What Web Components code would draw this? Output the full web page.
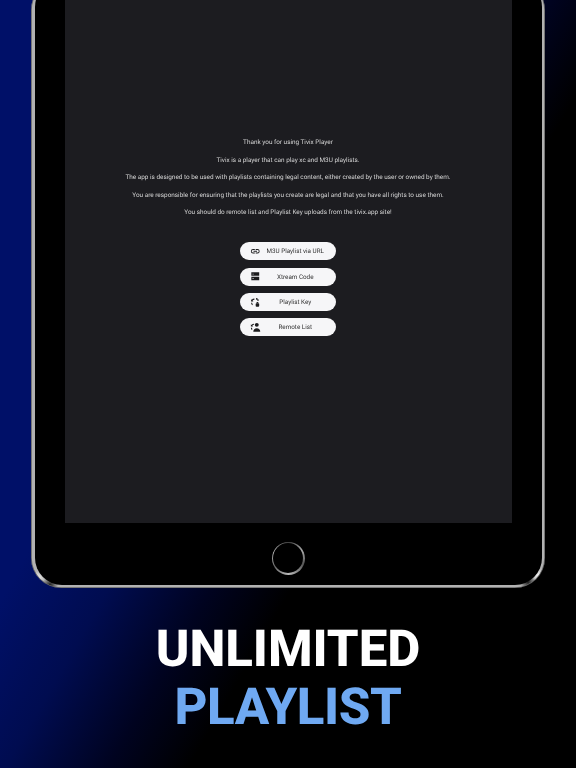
<!DOCTYPE html>
<html>
<head>
<meta charset="utf-8">
<style>
  html, body { margin: 0; height: 768px; overflow: hidden; background: #000; }
  body { font-family: Roboto, "Liberation Sans", sans-serif; text-rendering: geometricPrecision; }
</style>
</head>
<body>
<promo-page>
  <tablet-frame>
    <intro-text>
      <p>Thank you for using Tivix Player</p>
      <p>Tivix is a player that can play xc and M3U playlists.</p>
      <p>The app is designed to be used with playlists containing legal content, either created by the user or owned by them.</p>
      <p>You are responsible for ensuring that the playlists you create are legal and that you have all rights to use them.</p>
      <p>You should do remote list and Playlist Key uploads from the tivix.app site!</p>
    </intro-text>
    <menu-button icon="link">M3U Playlist via URL</menu-button>
    <menu-button icon="server">Xtream Code</menu-button>
    <menu-button icon="key">Playlist Key</menu-button>
    <menu-button icon="remote">Remote List</menu-button>
  </tablet-frame>
  <span slot="title">UNLIMITED</span>
  <span slot="subtitle">PLAYLIST</span>
</promo-page>
<script>
class PromoPage extends HTMLElement {
  constructor() {
    super();
    this.attachShadow({ mode: 'open' });
    this.shadowRoot.innerHTML = `
      <style>
        :host { display: block; width: 576px; height: 768px; overflow: hidden; color: #fff;
          background: linear-gradient(120deg, #001068 0%, #001068 34%, #000c50 44%, #000320 54%, #000 62%); }
        .top { height: 588px; display: flex; align-items: flex-end; justify-content: center; }
        h1 { margin: 33px 0 0; font: 800 51px/58px Roboto, sans-serif; letter-spacing: -.1px; text-align: center; will-change: transform; }
        h1 div:last-child { color: #6fa9f2; letter-spacing: -.4px; }
      </style>
      <div class="top"><slot></slot></div>
      <h1><div><slot name="title"></slot></div><div><slot name="subtitle"></slot></div></h1>
    `;
  }
}
customElements.define('promo-page', PromoPage);

class TabletFrame extends HTMLElement {
  constructor() {
    super();
    this.attachShadow({ mode: 'open' });
    this.shadowRoot.innerHTML = `
      <style>
        :host { display: block; width: 514px; height: 608px; box-sizing: border-box; padding: 0 3.5px 3.5px; border-radius: 30px; flex: none;
          box-shadow: inset .8px 0 #666, inset -.8px 0 #666, inset 0 -.8px #666;
          background:
            radial-gradient(circle 7px at 7px 598px, #f2f2f2, transparent),
            radial-gradient(circle 7px at 507px 595px, #f2f2f2, transparent),
            radial-gradient(circle 8px at 19px 605px, #1c1c1c, transparent),
            radial-gradient(circle 8px at 497px 602px, #1c1c1c, transparent),
            linear-gradient(#b2b2b2, #b2b2b2); }
        .body { height: 100%; background: #000; border-radius: 27px; display: flex; flex-direction: column; align-items: center; }
        .screen { width: 447px; height: 542.500px; flex: none; background: #1c1c20; box-sizing: border-box; padding-top: 154px;
          display: flex; flex-direction: column; align-items: center; gap: 7.3px; }
        .home { width: 33px; height: 33px; margin-top: 19px; border-radius: 50%; flex: none; box-sizing: border-box; padding: 1.4px;
          background: conic-gradient(#444, #aaa 60deg, #555 110deg, #bbb 180deg, #666 240deg, #bbb 290deg, #444); }
        .home div { height: 100%; border-radius: 50%; background: #000; }
      </style>
      <div class="body">
        <div class="screen"><slot></slot></div>
        <div class="home"><div></div></div>
      </div>
    `;
  }
}
customElements.define('tablet-frame', TabletFrame);

class IntroText extends HTMLElement {
  constructor() {
    super();
    this.attachShadow({ mode: 'open' });
    this.shadowRoot.innerHTML = `
      <style>
        :host { display: block; margin-bottom: 13.5px; text-align: center; color: #d4d4d4; filter: blur(.3px);
          font: 400 6.4px/17.5px Roboto, sans-serif; }
        ::slotted(p) { margin: 0; }
      </style>
      <slot></slot>
    `;
  }
}
customElements.define('intro-text', IntroText);

const ICONS = {
  link: '<path d="M3.900 12c0-1.700 1.400-3.100 3.100-3.100h4V7H7a5 5 0 0 0 0 10h4v-1.900H7A3.100 3.100 0 0 1 3.900 12zM8 13h8v-2H8v2zm9-6h-4v1.900h4a3.100 3.100 0 0 1 0 6.200h-4V17h4a5 5 0 0 0 0-10z"/>',
  server: '<path d="M3 3h18v8H3V3zm3 3v2h2V6H6zM3 13h18v8H3v-8zm3 3v2h2v-2H6z"/>',
  key: '<path d="M10 3.500a8.500 8.500 0 0 0-6 3L2.500 5v5.500H8L5.800 8.300A6 6 0 0 1 10 6V3.500zM2.500 13h2.400c.2 1.500.7 2.800 1.600 3.900l-1.700 1.700A9 9 0 0 1 2.500 13z"/><path d="M14 2h3v3h2.500v4h-2.500V6h-3V2z"/><rect x="13" y="14" width="8" height="8" rx="2"/><rect x="15" y="11.500" width="4" height="3"/>',
  remote: '<path d="M9 4a8.500 8.500 0 0 0-5.500 2.700L2 5v5.500h5.500L5.300 8.300A6 6 0 0 1 9 6.500V4zM2 13h2.400c.2 1.300.6 2.400 1.300 3.300L4 18a9 9 0 0 1-2-5z"/><circle cx="15.500" cy="6.500" r="4.500"/><path d="M7.500 22c0-4.500 3.500-8 8-8s8 3.500 8 8H7.500z"/>'
};

class MenuButton extends HTMLElement {
  constructor() {
    super();
    this.attachShadow({ mode: 'open' });
    this.shadowRoot.innerHTML = `
      <style>
        :host { display: flex; align-items: center; width: 96px; height: 18px; flex: none; box-sizing: border-box; padding-left: 10px;
          background: #f6f6f8; border-radius: 9px; color: #333; font: 400 6.3px/18px Roboto, sans-serif; filter: blur(.3px); }
        svg { width: 10.500px; height: 10.500px; flex: none; fill: #1b1b1d; }
        .label { flex: 1; text-align: center; white-space: nowrap; padding-right: 6px; }
      </style>
      <svg viewBox="0 0 24 24"></svg>
      <span class="label"><slot></slot></span>
    `;
  }
  connectedCallback() {
    this.shadowRoot.querySelector('svg').innerHTML = ICONS[this.getAttribute('icon')] || '';
  }
}
customElements.define('menu-button', MenuButton);
</script>
</body>
</html>
